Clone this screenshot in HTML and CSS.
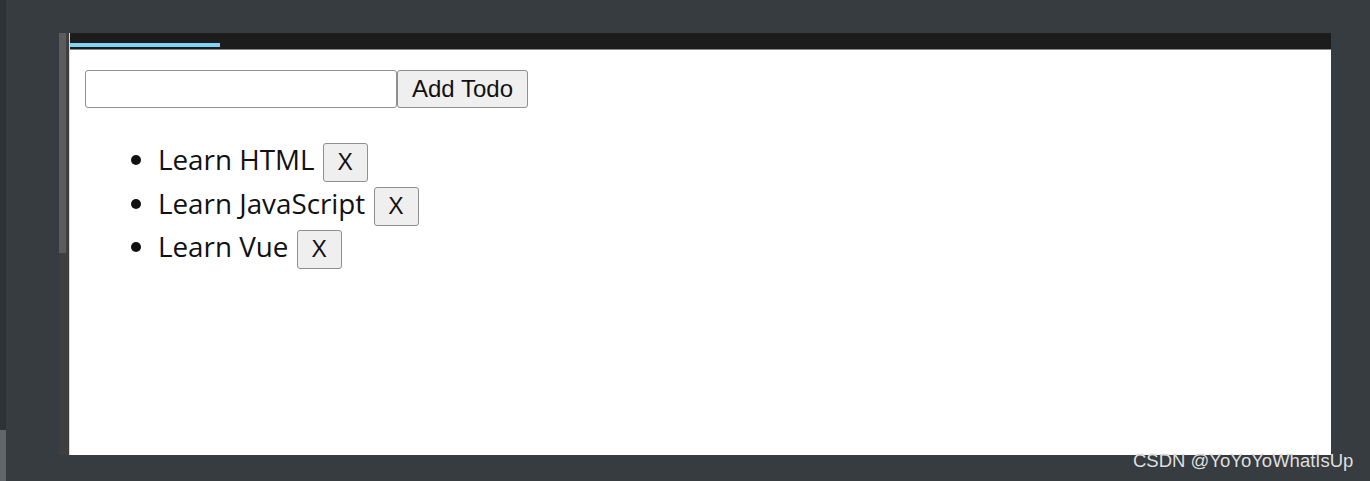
FILE: index.html
```html
<!DOCTYPE html>
<html>
<head>
<meta charset="utf-8">
<link rel="stylesheet" href="styles.css">
</head>
<body>
<div class="edge">
  <div class="edge-top"></div>
  <div class="edge-bottom"></div>
</div>
<div class="stage">
  <div class="panel">
    <div class="scrollbar"><div class="thumb"></div></div>
    <div class="main">
      <div class="topbar"><div class="progress"></div></div>
      <div class="content">
        <div class="form">
          <input class="field" type="text">
          <button class="add-btn">Add Todo</button>
        </div>
        <ul class="todos">
          <li class="todo">Learn HTML <button class="del-btn">X</button></li>
          <li class="todo">Learn JavaScript <button class="del-btn">X</button></li>
          <li class="todo">Learn Vue <button class="del-btn">X</button></li>
        </ul>
      </div>
    </div>
  </div>
</div>
<div class="watermark">CSDN @YoYoYoWhatIsUp</div>
</body>
</html>
```
FILE: styles.css
```css
html, body {
  margin: 0;
  padding: 0;
  width: 1370px;
  height: 481px;
  overflow: hidden;
}
body {
  background: #373c41;
  display: flex;
  position: relative;
  font-family: "Liberation Sans", Arial, sans-serif;
}
.edge {
  width: 6px;
  display: flex;
  flex-direction: column;
}
.edge-top {
  height: 430px;
  background: #2e3135;
}
.edge-bottom {
  flex: 1;
  background: #636669;
}
.stage {
  padding: 33px 0 0 53px;
}
.panel {
  display: flex;
  width: 1272px;
  height: 422px;
}
.scrollbar {
  width: 10px;
  background: #3f3f3f;
  border-right: 1px solid #3c3c3c;
  box-sizing: border-box;
}
.thumb {
  width: 7px;
  height: 220px;
  background: #5c5c5c;
}
.main {
  flex: 1;
  display: flex;
  flex-direction: column;
  border-left: 1px solid #d8d8d8;
}
.topbar {
  height: 17px;
  background: #1c1c1c;
  border-bottom: 1px solid #8a8a8a;
  padding-top: 10px;
  box-sizing: border-box;
}
.progress {
  width: 150px;
  height: 4px;
  background: #7fd3f5;
}
.content {
  flex: 1;
  background: #fff;
  padding: 20px 0 0 15px;
}
.form {
  display: flex;
}
.field {
  width: 312px;
  height: 38px;
  box-sizing: border-box;
  border: 1px solid #8f8f8f;
  border-radius: 3px;
  margin: 0;
  padding: 0 4px;
  font-size: 22px;
  background: #fff;
}
.add-btn {
  height: 38px;
  width: 131px;
  box-sizing: border-box;
  margin: 0;
  padding: 0;
  border: 1px solid #8f8f8f;
  border-radius: 3px;
  background: #efefef;
  color: #111;
  font-family: "Liberation Sans", Arial, sans-serif;
  font-size: 24px;
}
.todos {
  margin: 32px 0 0 0;
  padding: 0 0 0 73px;
  font-family: "Open Sans", "Noto Sans", sans-serif;
  font-size: 27.8px;
  color: #111;
}
.todo {
  height: 43.5px;
}
.del-btn {
  height: 39px;
  width: 45px;
  box-sizing: border-box;
  margin: 0 0 0 1px;
  padding: 0;
  border: 1px solid #8f8f8f;
  border-radius: 3px;
  background: #efefef;
  color: #111;
  font-family: "Liberation Sans", Arial, sans-serif;
  font-size: 23px;
  vertical-align: middle;
}
.watermark {
  position: absolute;
  left: 1133px;
  top: 450px;
  font-family: "Liberation Sans", Arial, sans-serif;
  font-size: 18.5px;
  color: #e0e0e0;
  text-shadow: 0 0 1px rgba(0,0,0,0.4);
}
```
